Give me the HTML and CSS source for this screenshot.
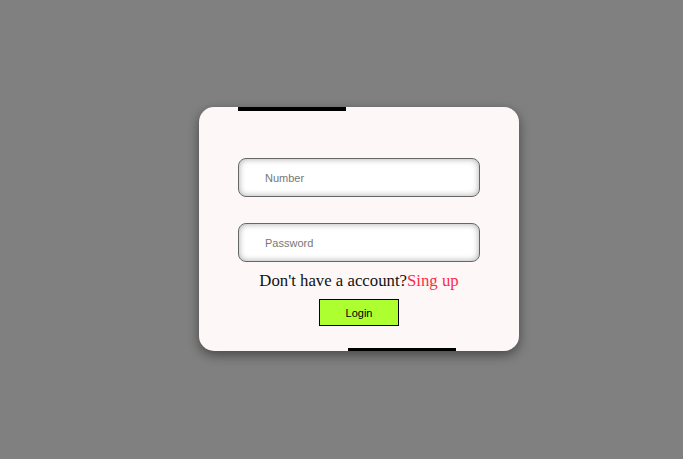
FILE: index.html
```html
<!DOCTYPE html>
<html>
<head>
<meta charset="utf-8">
<link rel="stylesheet" href="styles.css">
</head>
<body>
<div class="page">
  <form class="card">
    <span class="bar bar-top"></span>
    <input class="field" type="text" placeholder="Number">
    <input class="field field-pass" type="password" placeholder="Password">
    <p class="signup">Don't have a account?<a class="signup-link">Sing up</a></p>
    <button class="login" type="button">Login</button>
    <span class="bar bar-bottom"></span>
  </form>
</div>
</body>
</html>
```
FILE: styles.css
```css
html, body {
  margin: 0;
  padding: 0;
  height: 100%;
  background: #808080;
}
.page {
  height: 459px;
  display: flex;
  align-items: flex-start;
  padding: 107px 0 0 199px;
  box-sizing: border-box;
}
.card {
  position: relative;
  width: 320px;
  height: 244px;
  box-sizing: border-box;
  background: #fdf8f7;
  border-radius: 15px;
  box-shadow: 0 4px 12px rgba(0, 0, 0, 0.45);
  padding-top: 51px;
  display: flex;
  flex-direction: column;
  align-items: center;
  margin: 0;
}
.bar {
  position: absolute;
  height: 4px;
  width: 108px;
  background: #000;
}
.bar-top {
  top: 0;
  left: 39px;
}
.bar-bottom {
  bottom: 0;
  left: 149px;
  height: 3px;
}
.field {
  width: 242px;
  height: 39px;
  box-sizing: border-box;
  border: 1px solid #666;
  border-radius: 8px;
  background: #fff;
  box-shadow: inset 0 0 6px rgba(0, 0, 0, 0.35);
  padding: 0 0 0 26px;
  font-family: "Liberation Sans", Arial, sans-serif;
  font-size: 11px;
  color: #333;
  outline: none;
  margin: 0;
}
.field::placeholder {
  color: #777;
}
.field-pass {
  margin-top: 26px;
}
.signup {
  margin: 8px 0 0 0;
  font-family: "Liberation Serif", "Times New Roman", serif;
  font-size: 16.75px;
  line-height: 22px;
  color: #111;
}
.signup-link {
  color: #ff2a4a;
}
.login {
  margin-top: 7px;
  width: 80px;
  height: 27px;
  box-sizing: border-box;
  background: #adff2f;
  border: 1px solid #000;
  font-family: "Liberation Sans", Arial, sans-serif;
  font-size: 11px;
  color: #000;
  padding: 0;
}
```
